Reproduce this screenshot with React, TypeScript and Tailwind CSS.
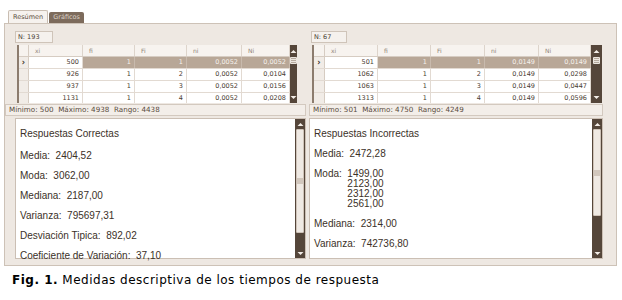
import React from "react";

type Row = { xi: string; fi: string; Fi: string; ni: string; Ni: string };

const LEFT_ROWS: Row[] = [
  { xi: "500", fi: "1", Fi: "1", ni: "0,0052", Ni: "0,0052" },
  { xi: "926", fi: "1", Fi: "2", ni: "0,0052", Ni: "0,0104" },
  { xi: "937", fi: "1", Fi: "3", ni: "0,0052", Ni: "0,0156" },
  { xi: "1131", fi: "1", Fi: "4", ni: "0,0052", Ni: "0,0208" },
];

const RIGHT_ROWS: Row[] = [
  { xi: "501", fi: "1", Fi: "1", ni: "0,0149", Ni: "0,0149" },
  { xi: "1062", fi: "1", Fi: "2", ni: "0,0149", Ni: "0,0298" },
  { xi: "1063", fi: "1", Fi: "3", ni: "0,0149", Ni: "0,0447" },
  { xi: "1313", fi: "1", Fi: "4", ni: "0,0149", Ni: "0,0596" },
];

const KEYS = ["xi", "fi", "Fi", "ni", "Ni"] as const;

function Arrow({ up }: { up?: boolean }) {
  return (
    <svg width="7" height="5" viewBox="0 0 7 5">
      <path d={up ? "M0.5 4 L3.5 1 L6.5 4 Z" : "M0.5 1 L3.5 4 L6.5 1 Z"} fill="#f3ede7" />
    </svg>
  );
}

function Grip() {
  return (
    <div className="flex flex-col gap-[1px]">
      <div className="h-px w-[5px] bg-[#b6aa9e]" />
      <div className="h-px w-[5px] bg-[#b6aa9e]" />
      <div className="h-px w-[5px] bg-[#b6aa9e]" />
    </div>
  );
}

function Grid({ rows, widths }: { rows: Row[]; widths: number[] }) {
  const cells = widths.slice(1, 6);
  return (
    <div className="flex h-[58px] border-l-2 border-[#8c7c6e] bg-white overflow-hidden">
      <div className="flex flex-col">
        <div className="flex h-[12px] border-b border-[#d6ccc2] bg-[#f7f3ef]">
          <div style={{ width: widths[0] }} className="border-r border-[#d6ccc2]" />
          {KEYS.map((k, i) => (
            <div
              key={k}
              style={{ width: cells[i] }}
              className="border-r border-[#ddd4cb] pl-[6px] text-[6px] leading-[11px] text-[#8f8379]"
            >
              {k}
            </div>
          ))}
        </div>
        {rows.map((r, ri) => (
          <div key={r.xi} className="flex h-[12px] border-b border-[#e2dad2]">
            <div
              style={{ width: widths[0] }}
              className="flex items-center justify-center border-r border-[#d6ccc2] bg-[#f1ece7] text-[8px] font-bold leading-none text-[#3b3128]"
            >
              {ri === 0 ? "›" : ""}
            </div>
            {KEYS.map((k, i) => {
              const sel = ri === 0 && i > 0;
              return (
                <div
                  key={k}
                  style={{ width: cells[i] }}
                  className={
                    "border-r pr-[3px] text-right text-[6.5px] leading-[11px] " +
                    (sel
                      ? "border-[#c8baad] bg-[#b8a797] text-[#f6f1ec]"
                      : "border-[#e2dad2] text-[#4a3d32]")
                  }
                >
                  {r[k]}
                </div>
              );
            })}
          </div>
        ))}
      </div>
      <div style={{ width: widths[6] }} className="flex flex-col bg-[#55463a]">
        <div className="flex h-[12px] items-center justify-center">
          <Arrow up />
        </div>
        <div className="mx-auto flex h-[7px] w-[7px] items-center justify-center rounded-[1px] bg-[#ece6df]">
          <Grip />
        </div>
        <div className="flex-1" />
        <div className="flex h-[12px] items-center justify-center">
          <Arrow />
        </div>
      </div>
    </div>
  );
}

function TextScroll({ thumbEnd }: { thumbEnd: number }) {
  return (
    <div className="flex w-[10px] flex-col bg-[#55463a]">
      <div className="flex h-[10px] items-center justify-center">
        <Arrow up />
      </div>
      <div
        style={{ height: thumbEnd }}
        className="mx-[1px] flex items-center justify-center rounded-[1px] border border-[#cfc3b8] bg-[#efe9e3]"
      >
        <div className="h-[6px] w-[6px] bg-[#d2c7bd]" />
      </div>
      <div className="flex-1" />
      <div className="flex h-[9px] items-center justify-center">
        <Arrow />
      </div>
    </div>
  );
}

function Stat({ label, value }: { label: string; value: string }) {
  return (
    <div className="h-[20px]">
      {label}: &nbsp;{value}
    </div>
  );
}

export default function App() {
  const sans = { fontFamily: '"Liberation Sans", Arial, sans-serif' };
  const tiny = { fontFamily: '"DejaVu Sans", Verdana, sans-serif' };
  return (
    <div className="h-[300px] w-[622px] bg-white pt-[10px]" style={tiny}>
      <div className="ml-[8px] flex h-[13px] items-end">
        <div className="h-[13px] rounded-t-[2px] border border-b-0 border-[#c9bdb1] bg-[#f6f2ee] px-[4px] text-[6.5px] leading-[12px] text-[#5b4c40]">
          Resúmen
        </div>
        <div className="ml-[1px] h-[11px] rounded-t-[2px] bg-[#7d6b5c] px-[4px] text-[6.5px] leading-[11px] text-[#d9cfc5]">
          Gráficos
        </div>
      </div>
      <div className="mx-[4px] h-[243px] w-[613px] border border-[#cdc2b7] bg-[#eee8e2]">
        <div className="flex h-full pt-[7px]">
          {/* left */}
          <div className="flex w-[301px] flex-col">
            <div className="ml-[10px] h-[12px] w-[38px] border border-[#cfc4b9] bg-[#f5f1ed] pl-[2px] text-[6.5px] leading-[10px] text-[#4a3d32]">
              N: 193
            </div>
            <div className="ml-[12px] mt-[2px] w-[280px]">
              <Grid rows={LEFT_ROWS} widths={[10, 54, 52, 52, 55, 48, 9]} />
            </div>
            <div className="mt-[1px] h-[12px] border border-[#d3c9bf] bg-[#f3eee9] pl-[3px] text-[7.2px] leading-[10px] text-[#5a4c40]">
              Mínimo: 500 &nbsp;Máximo: 4938 &nbsp;Rango: 4438
            </div>
            <div className="ml-[10px] mt-[2px] flex h-[141px] border border-[#cbbfb4] bg-white">
              <div className="flex-1 pl-[4px] pt-[5px] text-[10px] leading-[20px] text-[#3b3128]" style={sans}>
                <div className="h-[22px]">Respuestas Correctas</div>
                <Stat label="Media" value="2404,52" />
                <Stat label="Moda" value="3062,00" />
                <Stat label="Mediana" value="2187,00" />
                <Stat label="Varianza" value="795697,31" />
                <Stat label="Desviación Tipica" value="892,02" />
                <Stat label="Coeficiente de Variación" value="37,10" />
              </div>
              <TextScroll thumbEnd={104} />
            </div>
          </div>
          {/* splitter */}
          <div className="w-[3px]" />
          {/* right */}
          <div className="flex w-[294px] flex-col">
            <div className="ml-[2px] h-[12px] w-[36px] border border-[#cfc4b9] bg-[#f5f1ed] pl-[2px] text-[6.5px] leading-[10px] text-[#4a3d32]">
              N: 67
            </div>
            <div className="ml-[3px] mt-[2px] w-[290px]">
              <Grid rows={RIGHT_ROWS} widths={[11, 53, 53, 54, 54, 52, 13]} />
            </div>
            <div className="mt-[1px] h-[12px] border border-[#d3c9bf] bg-[#f3eee9] pl-[3px] text-[7.2px] leading-[10px] text-[#5a4c40]">
              Mínimo: 501 &nbsp;Máximo: 4750 &nbsp;Rango: 4249
            </div>
            <div className="mt-[2px] flex h-[141px] border border-[#cbbfb4] bg-white">
              <div className="flex-1 pl-[4px] pt-[5px] text-[10px] leading-[20px] text-[#3b3128]" style={sans}>
                <div className="h-[20px]">Respuestas Incorrectas</div>
                <Stat label="Media" value="2472,28" />
                <div className="flex">
                  <div>Moda: &nbsp;</div>
                  <div className="pt-[5px] leading-[10px]">
                    <div className="h-[10px]">1499,00</div>
                    <div className="h-[10px]">2123,00</div>
                    <div className="h-[10px]">2312,00</div>
                    <div className="h-[10px]">2561,00</div>
                  </div>
                </div>
                <div className="h-[5px]" />
                <Stat label="Mediana" value="2314,00" />
                <Stat label="Varianza" value="742736,80" />
              </div>
              <TextScroll thumbEnd={87} />
            </div>
          </div>
        </div>
      </div>
      <div className="ml-[12px] mt-[7px] text-[12px] leading-[15px] tracking-[0.5px] text-black" style={tiny}>
        <span className="font-bold">Fig. 1.</span> Medidas descriptiva de los tiempos de respuesta
      </div>
    </div>
  );
}
